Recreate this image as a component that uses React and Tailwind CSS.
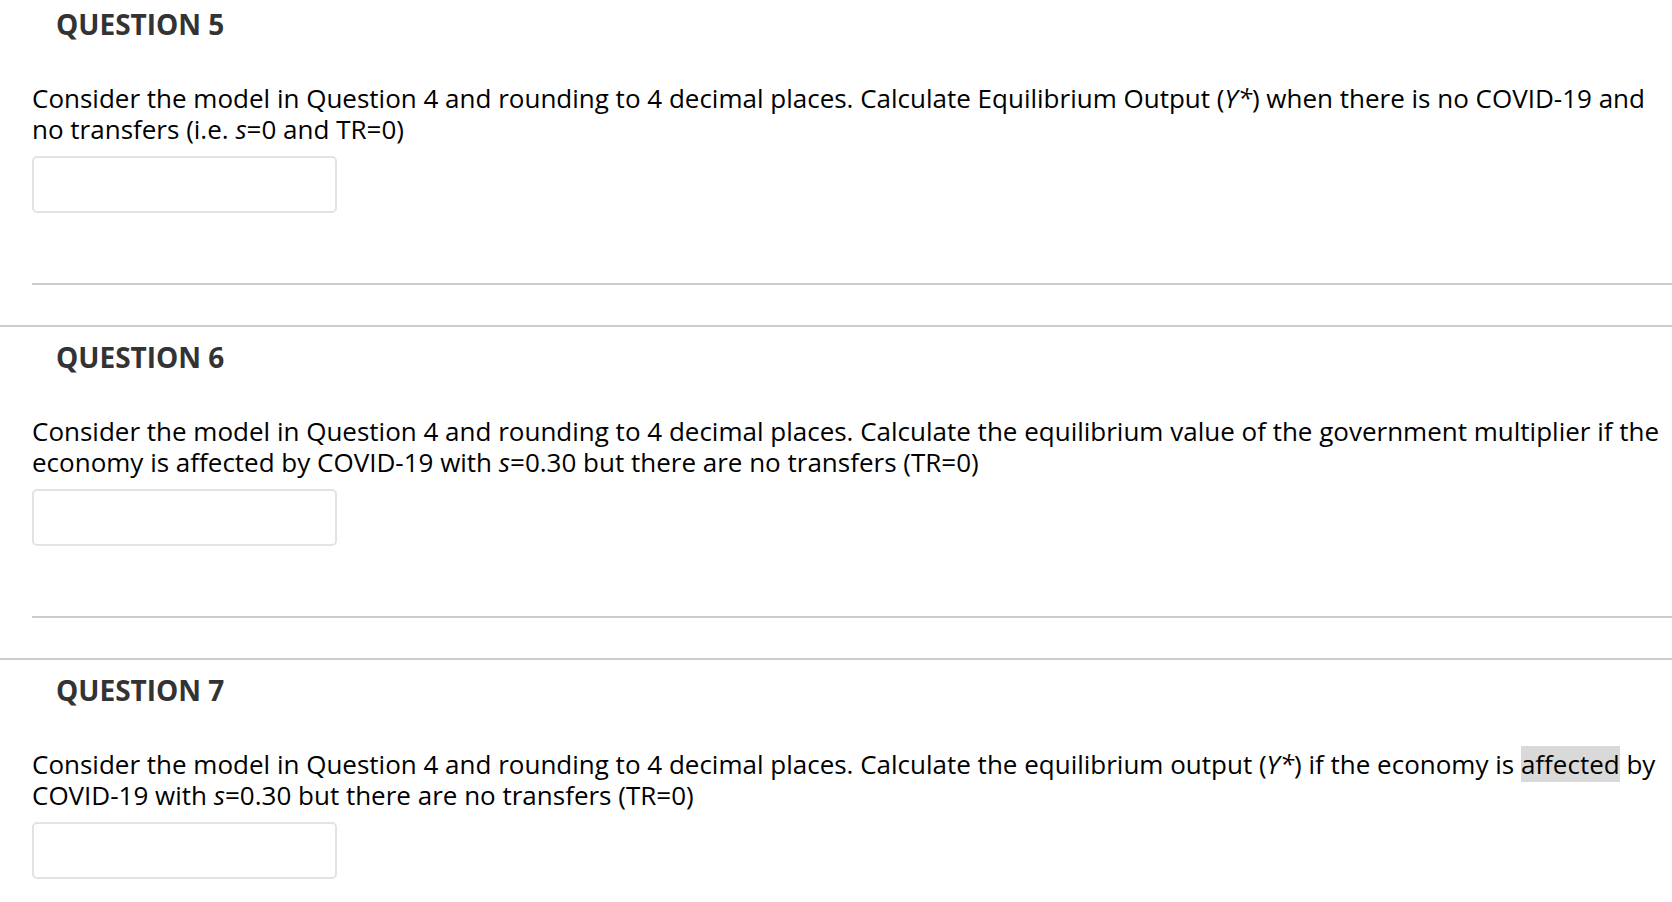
import React from 'react';

const questions = [
  {
    num: 5,
    lines: [
      <>Consider the model in Question 4 and rounding to 4 decimal places. Calculate Equilibrium Output (<i>Y*</i>) when there is no COVID-19 and</>,
      <>no transfers (i.e. <i>s</i>=0 and TR=0)</>,
    ],
  },
  {
    num: 6,
    lines: [
      <>Consider the model in Question 4 and rounding to 4 decimal places. Calculate the equilibrium value of the government multiplier if the</>,
      <>economy is affected by COVID-19 with <i>s</i>=0.30 but there are no transfers (TR=0)</>,
    ],
  },
  {
    num: 7,
    lines: [
      <>Consider the model in Question 4 and rounding to 4 decimal places. Calculate the equilibrium output (<i>Y*</i>) if the economy is <span className="bg-[#d9d9d9]">affected</span> by</>,
      <>COVID-19 with <i>s</i>=0.30 but there are no transfers (TR=0)</>,
    ],
  },
];

function Question({ q, first }) {
  return (
    <div className={first ? 'pt-[7px]' : 'border-t-2 border-[#cccccc] pt-[13px]'}>
      <h2 className="pl-[56px] text-[28px] leading-[34px] font-bold text-[#333333]">QUESTION {q.num}</h2>
      <div className="pl-[32px]">
        <p className="mt-[42px] text-[26px] leading-[31px] text-black whitespace-nowrap">
          {q.lines[0]}
          <br />
          {q.lines[1]}
        </p>
        <input
          type="text"
          className="mt-[11px] block w-[305px] h-[57px] rounded-[5px] border-2 border-[#e3e3e3] bg-white outline-none"
        />
        <div className="mt-[70px] mb-[40px] border-t-2 border-[#cccccc]" />
      </div>
    </div>
  );
}

export default function App() {
  return (
    <div className="min-h-screen w-full bg-white overflow-hidden" style={{ fontFamily: '"Open Sans", "Liberation Sans", sans-serif' }}>
      {questions.map((q, i) => (
        <Question key={q.num} q={q} first={i === 0} />
      ))}
    </div>
  );
}
